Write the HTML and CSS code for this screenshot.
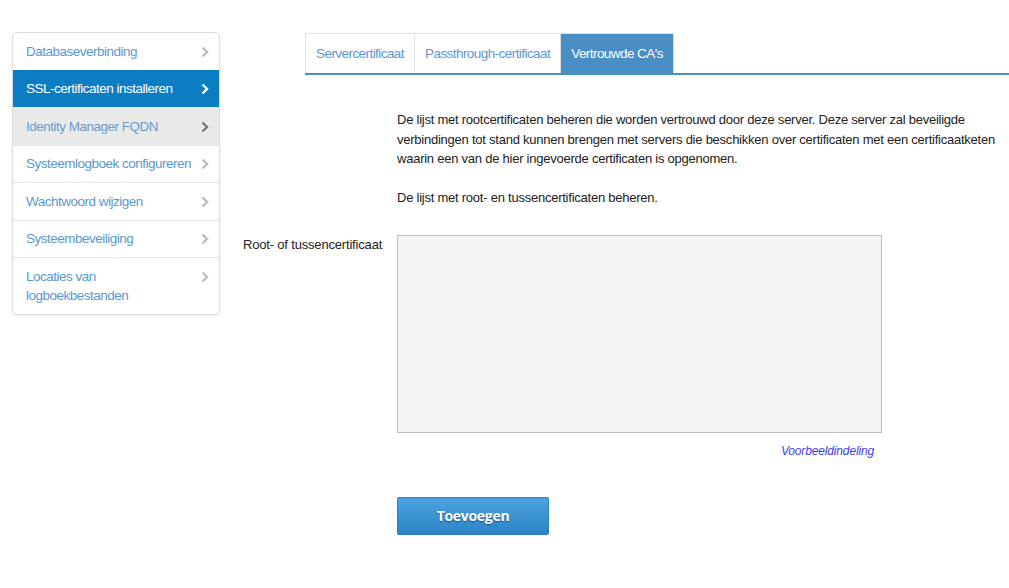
FILE: index.html
```html
<!DOCTYPE html>
<html lang="nl">
<head>
<meta charset="utf-8">
<title>SSL-certificaten installeren</title>
<link rel="stylesheet" href="styles.css">
</head>
<body>
<div class="page">
  <nav class="sidebar">
    <a class="nav-item">
      <span class="nav-label">Databaseverbinding</span>
      <svg class="chev" viewBox="0 0 8 12" width="8" height="12"><path d="M1.5 1.5 L6 6 L1.5 10.5" /></svg>
    </a>
    <a class="nav-item active">
      <span class="nav-label">SSL-certificaten installeren</span>
      <svg class="chev" viewBox="0 0 8 12" width="8" height="12"><path d="M1.5 1.5 L6 6 L1.5 10.5" /></svg>
    </a>
    <a class="nav-item hover">
      <span class="nav-label">Identity Manager FQDN</span>
      <svg class="chev" viewBox="0 0 8 12" width="8" height="12"><path d="M1.5 1.5 L6 6 L1.5 10.5" /></svg>
    </a>
    <a class="nav-item">
      <span class="nav-label">Systeemlogboek configureren</span>
      <svg class="chev" viewBox="0 0 8 12" width="8" height="12"><path d="M1.5 1.5 L6 6 L1.5 10.5" /></svg>
    </a>
    <a class="nav-item">
      <span class="nav-label">Wachtwoord wijzigen</span>
      <svg class="chev" viewBox="0 0 8 12" width="8" height="12"><path d="M1.5 1.5 L6 6 L1.5 10.5" /></svg>
    </a>
    <a class="nav-item">
      <span class="nav-label">Systeembeveiliging</span>
      <svg class="chev" viewBox="0 0 8 12" width="8" height="12"><path d="M1.5 1.5 L6 6 L1.5 10.5" /></svg>
    </a>
    <a class="nav-item">
      <span class="nav-label">Locaties van<br>logboekbestanden</span>
      <svg class="chev" viewBox="0 0 8 12" width="8" height="12"><path d="M1.5 1.5 L6 6 L1.5 10.5" /></svg>
    </a>
  </nav>

  <main class="main">
    <div class="tabs">
      <a class="tab">Servercertificaat</a>
      <a class="tab">Passthrough-certificaat</a>
      <a class="tab active">Vertrouwde CA's</a>
    </div>

    <p class="intro">De lijst met rootcertificaten beheren die worden vertrouwd door deze server. Deze server zal beveiligde verbindingen tot stand kunnen brengen met servers die beschikken over certificaten met een certificaatketen waarin een van de hier ingevoerde certificaten is opgenomen.<br><br>De lijst met root- en tussencertificaten beheren.</p>

    <div class="form-row">
      <label class="form-label" for="cert">Root- of tussencertificaat</label>
      <div class="form-field">
        <textarea id="cert" class="cert-input"></textarea>
        <div class="example-row"><a class="example">Voorbeeldindeling</a></div>
      </div>
    </div>

    <div class="actions">
      <button class="btn-primary">Toevoegen</button>
    </div>
  </main>
</div>
</body>
</html>
```

FILE: styles.css
```css
* { box-sizing: border-box; }

html, body {
  margin: 0;
  padding: 0;
  background: #ffffff;
  font-family: "Liberation Sans", Arial, sans-serif;
  color: #222;
}

.page {
  display: flex;
  align-items: flex-start;
  width: 1009px;
}

/* Sidebar */
.sidebar {
  width: 208px;
  margin: 32px 0 0 12px;
  border: 1px solid #dcdcdc;
  border-radius: 5px;
  box-shadow: 0 1px 3px rgba(0, 0, 0, 0.08);
  background: #fff;
  overflow: hidden;
  flex-shrink: 0;
}

.nav-item {
  display: flex;
  align-items: flex-start;
  justify-content: space-between;
  padding: 8.5px 10px 8.5px 13px;
  font-size: 13.5px;
  line-height: 19.5px;
  color: #5b98d0;
  border-top: 1px solid #e6e6e6;
  letter-spacing: -0.5px;
}

.nav-item:first-child { border-top: none; }

.nav-item.active {
  background: #0b7dc3;
  color: #ffffff;
  border-top-color: #0b7dc3;
}

.nav-item.hover {
  background: #e9e9e9;
  color: #6b9bc9;
  border-top-color: #e9e9e9;
}

.nav-item.active + .nav-item { border-top-color: #e9e9e9; }

.chev {
  flex-shrink: 0;
  margin-top: 4px;
  fill: none;
  stroke: #bdbdbd;
  stroke-width: 2.4;
  stroke-linecap: butt;
  stroke-linejoin: miter;
}

.nav-item.active .chev { stroke: #ffffff; }
.nav-item.hover .chev { stroke: #7a7a7a; }

/* Main */
.main {
  flex: 1;
  padding-top: 33px;
}

.tabs {
  display: flex;
  margin-left: 85px;
  border-bottom: 2px solid #4a8fc4;
}

.tab {
  display: block;
  height: 40px;
  padding: 0 10px;
  font-size: 13.5px;
  line-height: 40px;
  color: #5b98d0;
  border: 1px solid #e2e2e2;
  border-bottom: none;
  margin-right: -1px;
  letter-spacing: -0.56px;
}

.tab.active {
  background: #4a8fc4;
  color: #ffffff;
  border-color: #dedede;
}

.intro {
  margin: 35px 0 0 177px;
  width: 608px;
  font-size: 13px;
  line-height: 19.5px;
  color: #222;
  letter-spacing: -0.24px;
}

.form-row {
  display: flex;
  margin-top: 27px;
}

.form-label {
  width: 177px;
  padding-left: 23px;
  padding-top: 0px;
  font-size: 13px;
  line-height: 19px;
  color: #222;
  letter-spacing: -0.18px;
}

.form-field {
  width: 485px;
}

.cert-input {
  display: block;
  width: 485px;
  height: 198px;
  margin: 0;
  background: #f4f4f4;
  border: 1px solid #bdbdbd;
  border-radius: 0;
  resize: none;
}

.example-row {
  display: flex;
  justify-content: flex-end;
  padding-right: 8px;
  margin-top: 10px;
}

.example {
  font-size: 12px;
  line-height: 16px;
  font-style: italic;
  color: #3d3cf2;
  letter-spacing: -0.15px;
}

.actions {
  margin: 38px 0 0 177px;
}

.btn-primary {
  display: block;
  width: 152px;
  height: 38px;
  padding: 0;
  border: 1px solid #2f7fc0;
  border-radius: 2px;
  background: linear-gradient(#4ca3df, #2d84c6);
  box-shadow: 0 1px 1px rgba(0, 0, 0, 0.15);
  color: #ffffff;
  font-family: "Open Sans", "DejaVu Sans", sans-serif;
  font-weight: 700;
  font-size: 14px;
  letter-spacing: -0.3px;
  text-shadow: 0 1px 1px rgba(0, 0, 0, 0.45);
  cursor: pointer;
}
```
